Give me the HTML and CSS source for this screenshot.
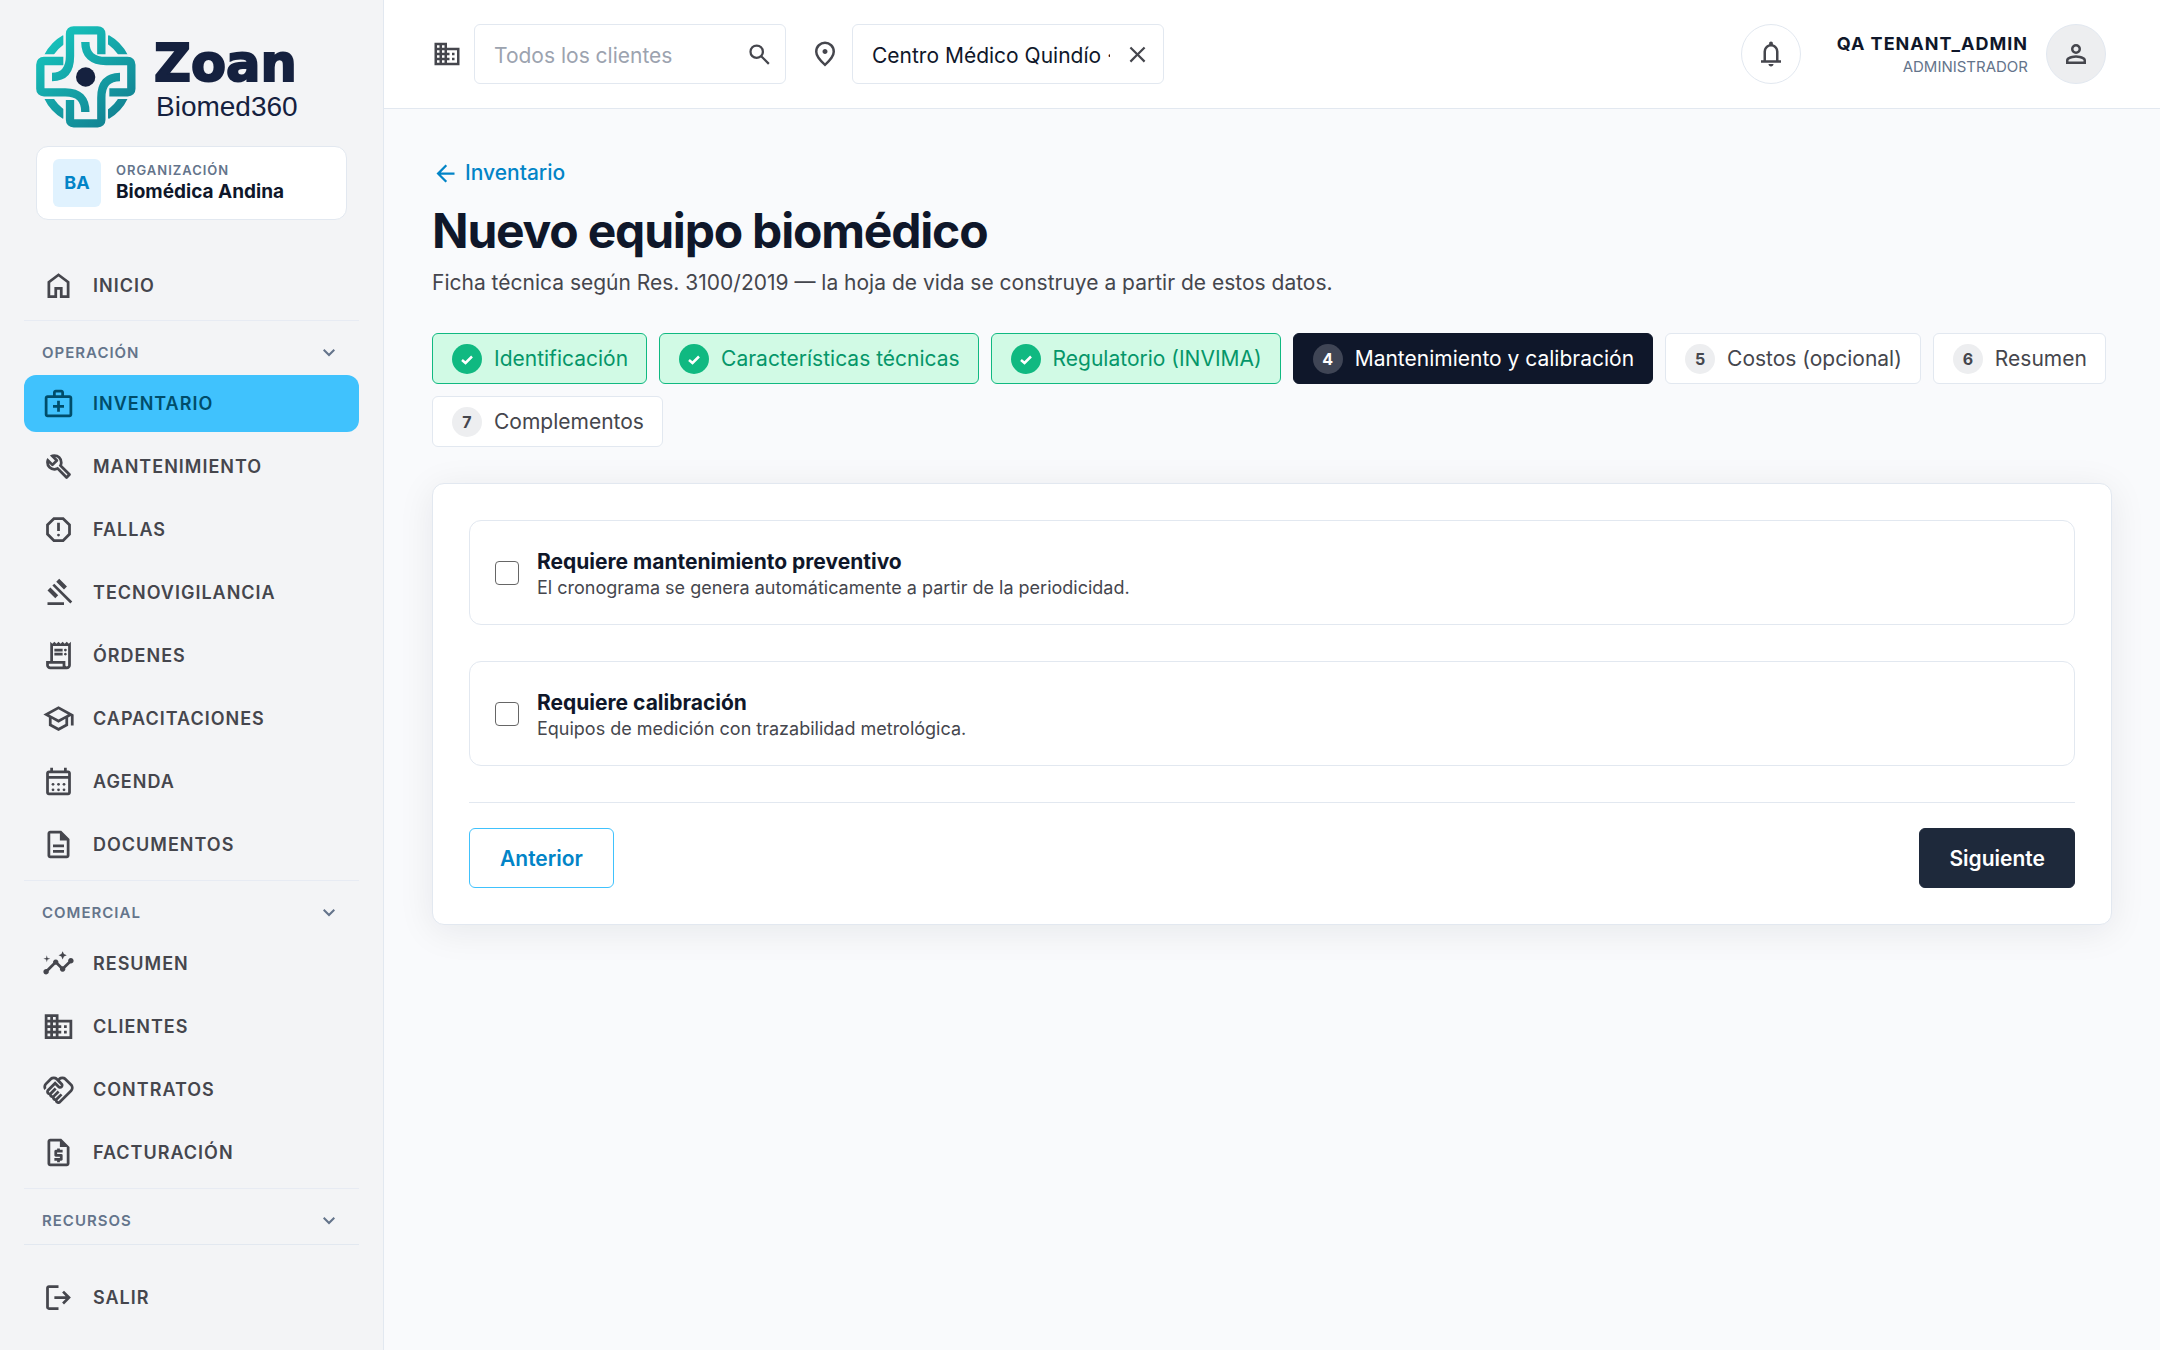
FILE: index.html
```html
<!DOCTYPE html>
<html lang="es">
<head>
<meta charset="utf-8">
<meta name="viewport" content="width=device-width, initial-scale=1">
<title>Nuevo equipo biomédico</title>
<link rel="stylesheet" href="styles.css">
</head>
<body>
<svg class="sprite" aria-hidden="true">
  <symbol id="i-home" viewBox="0 -960 960 960"><path d="M240-200h120v-240h240v240h120v-360L480-740 240-560v360Zm-80 80v-480l320-240 320 240v480H520v-240h-80v240H160Z"/></symbol>
  <symbol id="i-medical" viewBox="0 -960 960 960"><path d="M160-80q-33 0-56.500-23.500T80-160v-480q0-33 23.500-56.500T160-720h160v-80q0-33 23.500-56.500T400-880h160q33 0 56.500 23.500T640-800v80h160q33 0 56.500 23.500T880-640v480q0 33-23.500 56.500T800-80H160Zm0-80h640v-480H160v480Zm240-560h160v-80H400v80Zm40 360v120h80v-120h120v-80H520v-120h-80v120H320v80h120Z"/></symbol>
  <symbol id="i-build" viewBox="0 -960 960 960"><path d="M686-132 444-376q-20 8-40.500 12t-43.500 4q-100 0-170-70t-70-170q0-36 10-68.500t28-61.500l146 146 72-72-146-146q29-18 61.500-28t68.500-10q100 0 170 70t70 170q0 23-4 43.500T584-516l244 242q12 12 12 29t-12 29l-84 84q-12 12-29 12t-29-12Zm29-85 27-27-256-256q18-20 26-46.500t8-53.500q0-60-38.500-104.500T386-758l74 74q12 12 12 28t-12 28L332-500q-12 12-28 12t-28-12l-74-74q9 57 53.500 95.500T360-440q26 0 52-8t47-25l256 256Z"/></symbol>
  <symbol id="i-report" viewBox="0 -960 960 960"><path d="M480-280q17 0 28.500-11.500T520-320q0-17-11.500-28.500T480-360q-17 0-28.500 11.500T440-320q0 17 11.500 28.500T480-280Zm-40-160h80v-240h-80v240ZM330-120 120-330v-300l210-210h300l210 210v300L630-120H330Zm34-80h232l164-164v-232L596-760H364L200-596v232l164 164Z"/></symbol>
  <symbol id="i-gavel" viewBox="0 -960 960 960"><path d="M160-120v-80h480v80H160Zm226-194L160-540l84-86 228 226-86 86Zm254-254L414-796l86-84 226 226-86 86Zm184 408L302-682l56-56 522 522-56 56Z"/></symbol>
  <symbol id="i-receipt" viewBox="0 -960 960 960"><path d="M240-80q-50 0-85-35t-35-85v-120h120v-560l60 60 60-60 60 60 60-60 60 60 60-60 60 60 60-60 60 60 60-60v680q0 50-35 85t-85 35H240Zm480-80q17 0 28.500-11.500T760-200v-560H320v440h360v120q0 17 11.500 28.500T720-160ZM360-600v-80h240v80H360Zm0 120v-80h240v80H360Zm320-120q-17 0-28.500-11.500T640-640q0-17 11.500-28.500T680-680q17 0 28.500 11.500T720-640q0 17-11.500 28.500T680-600Zm0 120q-17 0-28.500-11.500T640-520q0-17 11.500-28.500T680-560q17 0 28.500 11.500T720-520q0 17-11.500 28.500T680-480ZM240-160h360v-80H200v40q0 17 11.500 28.500T240-160Z"/></symbol>
  <symbol id="i-school" viewBox="0 -960 960 960"><path d="M480-120 200-272v-240L40-600l440-240 440 240v320h-80v-276l-80 44v240L480-120Zm0-332 274-148-274-148-274 148 274 148Zm0 241 200-108v-151L480-360 280-470v151l200 108Z"/></symbol>
  <symbol id="i-calendar" viewBox="0 -960 960 960"><path d="M200-80q-33 0-56.500-23.500T120-160v-560q0-33 23.500-56.500T200-800h40v-80h80v80h320v-80h80v80h40q33 0 56.500 23.500T840-720v560q0 33-23.500 56.500T760-80H200Zm0-80h560v-400H200v400Zm0-480h560v-80H200v80Z"/><circle cx="320" cy="-400" r="40"/><circle cx="480" cy="-400" r="40"/><circle cx="640" cy="-400" r="40"/><circle cx="320" cy="-240" r="40"/><circle cx="480" cy="-240" r="40"/><circle cx="640" cy="-240" r="40"/></symbol>
  <symbol id="i-description" viewBox="0 -960 960 960"><path d="M320-240h320v-80H320v80Zm0-160h320v-80H320v80ZM240-80q-33 0-56.500-23.500T160-160v-640q0-33 23.500-56.500T240-880h320l240 240v480q0 33-23.500 56.500T720-80H240Zm280-520v-200H240v640h480v-440H520Z"/></symbol>
  <symbol id="i-insights" viewBox="0 0 24 24"><path d="M21 8c-1.450 0-2.260 1.440-1.930 2.510l-3.550 3.560c-.3-.09-.74-.09-1.040 0l-2.550-2.550C12.270 10.450 11.460 9 10 9c-1.450 0-2.270 1.440-1.930 2.520l-4.560 4.550C2.440 15.740 1 16.550 1 18c0 1.100.9 2 2 2 1.450 0 2.260-1.440 1.930-2.510l4.550-4.560c.3.09.74.09 1.040 0l2.550 2.550C12.730 16.550 13.540 18 15 18c1.450 0 2.270-1.440 1.930-2.520l3.560-3.550C21.560 12.260 23 11.450 23 10c0-1.100-.9-2-2-2zM15 9l.94-2.070L18 6l-2.060-.93L15 3l-.92 2.070L12 6l2.080.93L15 9zM3.500 11L4 9l2-.5L4 8l-.5-2L3 8l-2 .5L3 9l.5 2z"/></symbol>
  <symbol id="i-domain" viewBox="0 -960 960 960"><path d="M80-120v-720h400v160h400v560H80Zm80-80h80v-80h-80v80Zm0-160h80v-80h-80v80Zm0-160h80v-80h-80v80Zm0-160h80v-80h-80v80Zm160 480h80v-80h-80v80Zm0-160h80v-80h-80v80Zm0-160h80v-80h-80v80Zm0-160h80v-80h-80v80Zm160 480h320v-400H480v80h80v80h-80v80h80v80h-80v80Zm160-240v-80h80v80h-80Zm0 160v-80h80v80h-80Z"/></symbol>
  <symbol id="i-handshake" viewBox="0 -960 960 960"><path d="M475-140q4 0 8-2t8-4l328-328q12-12 17.500-27t5.500-30q0-16-5.500-30.500T817-587L647-757q-11-12-25.500-17.500T591-780q-15 0-30 5.500T534-757l-11 11 74 75q15 14 22 32t7 38q0 42-28.500 70.500T527-502q-20 0-38.500-7T456-530l-75-74-175 175q-3 3-4.500 6.500T200-415q0 8 6 14.500t14 6.500q4 0 8-2t6-4l136-136 56 56-135 136q-3 3-4.500 6.500T285-330q0 8 6 14t14 6q4 0 8-2t6-4l136-135 56 56-135 136q-3 2-4.500 6t-1.500 8q0 8 6 14t14 6q4 0 7.500-1.500t6.500-4.500l136-135 56 56-136 136q-3 3-4.500 6.500T454-160q0 8 6.500 14t14.500 6Zm-1 80q-37 0-65.500-24.500T375-146q-34-5-57-28t-28-57q-34-5-56.500-28.500T206-316q-38-5-62-33t-24-66q0-20 7.500-38.500T149-486l232-231 131 131q2 3 6 4.500t8 1.500q9 0 15-5.500t6-14.500q0-4-1.500-8t-4.500-6L398-757q-11-12-25.500-17.500T342-780q-15 0-30 5.500T285-757L144-615q-9 9-15 21t-8 24q-2 12 0 24.500t8 23.500l-58 58q-17-23-25-50.500T40-570q2-28 14-54.500T87-671l141-142q24-23 53.500-35t60.500-12q31 0 60.500 12t52.500 35l11 11 11-11q24-23 53.500-35t60.500-12q31 0 60.500 12t52.500 35l169 169q23 23 35 53t12 61q0 31-12 60.500T873-416L545-89q-14 14-32 21.500T474-60Z"/></symbol>
  <symbol id="i-quote" viewBox="0 -960 960 960"><path d="M440-200h80v-40h40q17 0 28.500-11.500T600-280v-120q0-17-11.500-28.500T560-440H440v-40h160v-80h-80v-40h-80v40h-40q-17 0-28.500 11.500T360-520v120q0 17 11.500 28.500T400-360h120v40H360v80h80v40ZM240-80q-33 0-56.500-23.500T160-160v-640q0-33 23.500-56.500T240-880h320l240 240v480q0 33-23.500 56.500T720-80H240Zm280-560v-160H240v640h480v-480H520Z"/></symbol>
  <symbol id="i-logout" viewBox="0 -960 960 960"><path d="M200-120q-33 0-56.500-23.500T120-200v-560q0-33 23.500-56.500T200-840h280v80H200v560h280v80H200Zm440-160-55-58 102-102H360v-80h327L585-622l55-58 200 200-200 200Z"/></symbol>
  <symbol id="i-search" viewBox="0 -960 960 960"><path d="M784-120 532-372q-30 24-69 38t-83 14q-109 0-184.500-75.500T120-580q0-109 75.500-184.500T380-840q109 0 184.500 75.500T640-580q0 44-14 83t-38 69l252 252-56 56ZM380-400q75 0 127.500-52.500T560-580q0-75-52.500-127.500T380-760q-75 0-127.500 52.500T200-580q0 75 52.500 127.500T380-400Z"/></symbol>
  <symbol id="i-location" viewBox="0 -960 960 960"><path d="M480-480q33 0 56.500-23.500T560-560q0-33-23.500-56.500T480-640q-33 0-56.500 23.500T400-560q0 33 23.500 56.500T480-480Zm0 294q122-112 181-203.500T720-552q0-109-69.500-178.500T480-800q-101 0-170.500 69.500T240-552q0 71 59 162.500T480-186Zm0 106Q319-217 239.500-334.500T160-552q0-150 96.500-239T480-880q127 0 223.500 89T800-552q0 100-79.500 217.500T480-80Z"/></symbol>
  <symbol id="i-close" viewBox="0 -960 960 960"><path d="m256-200-56-56 224-224-224-224 56-56 224 224 224-224 56 56-224 224 224 224-56 56-224-224-224 224Z"/></symbol>
  <symbol id="i-bell" viewBox="0 -960 960 960"><path d="M160-200v-80h80v-280q0-83 50-147.500T420-792v-28q0-25 17.500-42.500T480-880q25 0 42.500 17.500T540-820v28q80 20 130 84.500T720-560v280h80v80H160ZM480-80q-33 0-56.500-23.500T400-160h160q0 33-23.500 56.500T480-80ZM320-280h320v-280q0-66-47-113t-113-47q-66 0-113 47t-47 113v280Z"/></symbol>
  <symbol id="i-person" viewBox="0 -960 960 960"><path d="M480-480q-66 0-113-47t-47-113q0-66 47-113t113-47q66 0 113 47t47 113q0 66-47 113t-113 47ZM160-160v-112q0-34 17.500-62.500T224-378q62-31 126-46.500T480-440q66 0 130 15.500T736-378q29 15 46.500 43.500T800-272v112H160Zm80-80h480v-32q0-11-5.500-20T700-306q-54-27-109-40.500T480-360q-56 0-111 13.500T260-306q-9 5-14.500 14t-5.500 20v32Zm240-320q33 0 56.500-23.500T560-640q0-33-23.500-56.500T480-720q-33 0-56.500 23.500T400-640q0 33 23.500 56.500T480-560Z"/></symbol>
  <symbol id="i-back" viewBox="0 -960 960 960"><path d="m313-440 224 224-57 56-320-320 320-320 57 56-224 224h487v80H313Z"/></symbol>
  <symbol id="i-chevron" viewBox="0 -960 960 960"><path d="M480-344 240-584l56-56 184 184 184-184 56 56-240 240Z"/></symbol>
  <symbol id="i-check" viewBox="0 0 16 16"><path d="M3 9 6.500 12 13 5.500" fill="none" stroke="currentColor" stroke-width="2.500"/></symbol>
</svg>

<div class="app">
  <aside class="sidebar">
    <div class="brand">
      <svg class="brand-mark" viewBox="0 0 300 306" role="img" aria-label="Zoan">
        <defs>
          <linearGradient id="teal" gradientUnits="userSpaceOnUse" x1="40" y1="20" x2="250" y2="290">
            <stop offset="0" stop-color="#17c5bd"/><stop offset="1" stop-color="#128091"/>
          </linearGradient>
        </defs>
        <g fill="none" stroke="url(#teal)" stroke-width="25">
          <path d="M36 92A128 128 0 0 1 88 38M212 38A128 128 0 0 1 264 92M264 212A128 128 0 0 1 212 268M88 268A128 128 0 0 1 36 212"/>
        </g>
        <g fill="none" stroke="#f3f4f6" stroke-width="40" stroke-linejoin="round">
          <path d="M102 85V24Q102 13 113 13H185Q196 13 196 24V85"/>
          <path d="M215 105H275Q286 105 286 116V188Q286 199 275 199H222"/>
          <path d="M196 222V281Q196 292 185 292H113Q102 292 102 281V222"/>
          <path d="M85 199H24Q13 199 13 188V116Q13 105 24 105H82"/>
        </g>
        <g fill="none" stroke="url(#teal)" stroke-width="25">
          <path d="M82 105H24Q13 105 13 116V188Q13 199 24 199H88Q148 199 148 258"/>
          <path d="M48 153Q102 153 102 90V24Q102 13 113 13H185Q196 13 196 24V85"/>
          <path d="M148 48Q148 105 210 105H275Q286 105 286 116V188Q286 199 275 199H220"/>
          <path d="M252 153Q196 153 196 215V281Q196 292 185 292H113Q102 292 102 281V222"/>
        </g>
        <circle cx="149" cy="153" r="29" fill="#15213f"/>
      </svg>
      <div class="brand-text">
        <span class="brand-name">Zoan</span>
        <span class="brand-sub">Biomed360</span>
      </div>
    </div>

    <div class="org">
      <span class="org-badge">BA</span>
      <div class="org-text">
        <span class="org-label">Organización</span>
        <span class="org-name">Biomédica Andina</span>
      </div>
    </div>

    <nav class="nav">
      <a class="nav-item" href="#"><svg class="icon-nav"><use href="#i-home"/></svg>Inicio</a>
      <section class="nav-group">
        <button class="nav-head" type="button">Operación<svg class="icon-sm"><use href="#i-chevron"/></svg></button>
        <a class="nav-item active" href="#" aria-current="page"><svg class="icon-nav"><use href="#i-medical"/></svg>Inventario</a>
        <a class="nav-item" href="#"><svg class="icon-nav"><use href="#i-build"/></svg>Mantenimiento</a>
        <a class="nav-item" href="#"><svg class="icon-nav"><use href="#i-report"/></svg>Fallas</a>
        <a class="nav-item" href="#"><svg class="icon-nav"><use href="#i-gavel"/></svg>Tecnovigilancia</a>
        <a class="nav-item" href="#"><svg class="icon-nav"><use href="#i-receipt"/></svg>Órdenes</a>
        <a class="nav-item" href="#"><svg class="icon-nav"><use href="#i-school"/></svg>Capacitaciones</a>
        <a class="nav-item" href="#"><svg class="icon-nav"><use href="#i-calendar"/></svg>Agenda</a>
        <a class="nav-item" href="#"><svg class="icon-nav"><use href="#i-description"/></svg>Documentos</a>
      </section>
      <section class="nav-group">
        <button class="nav-head" type="button">Comercial<svg class="icon-sm"><use href="#i-chevron"/></svg></button>
        <a class="nav-item" href="#"><svg class="icon-nav"><use href="#i-insights"/></svg>Resumen</a>
        <a class="nav-item" href="#"><svg class="icon-nav"><use href="#i-domain"/></svg>Clientes</a>
        <a class="nav-item" href="#"><svg class="icon-nav"><use href="#i-handshake"/></svg>Contratos</a>
        <a class="nav-item" href="#"><svg class="icon-nav"><use href="#i-quote"/></svg>Facturación</a>
      </section>
      <section class="nav-group">
        <button class="nav-head" type="button">Recursos<svg class="icon-sm"><use href="#i-chevron"/></svg></button>
      </section>
    </nav>

    <div class="sidebar-foot">
      <a class="nav-item" href="#"><svg class="icon-nav"><use href="#i-logout"/></svg>Salir</a>
    </div>
  </aside>

  <div class="page">
    <header class="topbar">
      <div class="filters">
        <div class="filter">
          <svg class="icon-lg"><use href="#i-domain"/></svg>
          <div class="field">
            <input class="field-input" type="text" placeholder="Todos los clientes" aria-label="Cliente">
            <button class="field-btn" type="button" aria-label="Buscar"><svg class="icon-md"><use href="#i-search"/></svg></button>
          </div>
        </div>
        <div class="filter">
          <svg class="icon-lg"><use href="#i-location"/></svg>
          <div class="field">
            <input class="field-input" type="text" value="Centro Médico Quindío ·" aria-label="Sede">
            <button class="field-btn" type="button" aria-label="Limpiar"><svg class="icon-md"><use href="#i-close"/></svg></button>
          </div>
        </div>
      </div>
      <div class="account">
        <button class="round-btn" type="button" aria-label="Notificaciones"><svg class="icon-lg"><use href="#i-bell"/></svg></button>
        <div class="user">
          <div class="user-text">
            <span class="user-name">QA TENANT_ADMIN</span>
            <span class="user-role">Administrador</span>
          </div>
          <button class="round-btn avatar" type="button" aria-label="Cuenta"><svg class="icon-lg"><use href="#i-person"/></svg></button>
        </div>
      </div>
    </header>

    <main class="main">
      <a class="back" href="#"><svg class="icon-md"><use href="#i-back"/></svg>Inventario</a>
      <h1 class="title">Nuevo equipo biomédico</h1>
      <p class="subtitle">Ficha técnica según Res. 3100/2019 — la hoja de vida se construye a partir de estos datos.</p>

      <div class="steps">
        <button class="step done" type="button"><span class="step-dot"><svg class="icon-check"><use href="#i-check"/></svg></span>Identificación</button>
        <button class="step done" type="button"><span class="step-dot"><svg class="icon-check"><use href="#i-check"/></svg></span>Características técnicas</button>
        <button class="step done" type="button"><span class="step-dot"><svg class="icon-check"><use href="#i-check"/></svg></span>Regulatorio (INVIMA)</button>
        <button class="step current" type="button" aria-current="step"><span class="step-dot">4</span>Mantenimiento y calibración</button>
        <button class="step" type="button"><span class="step-dot">5</span>Costos (opcional)</button>
        <button class="step" type="button"><span class="step-dot">6</span>Resumen</button>
        <button class="step" type="button"><span class="step-dot">7</span>Complementos</button>
      </div>

      <form class="card">
        <label class="option">
          <input class="option-check" type="checkbox">
          <span class="option-text">
            <span class="option-title">Requiere mantenimiento preventivo</span>
            <span class="option-desc">El cronograma se genera automáticamente a partir de la periodicidad.</span>
          </span>
        </label>
        <label class="option">
          <input class="option-check" type="checkbox">
          <span class="option-text">
            <span class="option-title">Requiere calibración</span>
            <span class="option-desc">Equipos de medición con trazabilidad metrológica.</span>
          </span>
        </label>
        <div class="actions">
          <button class="btn btn-outline" type="button">Anterior</button>
          <button class="btn btn-dark" type="button">Siguiente</button>
        </div>
      </form>
    </main>
  </div>
</div>
</body>
</html>
```
FILE: styles.css
```css
* { box-sizing: border-box; }

body {
  margin: 0;
  font-family: Inter, "Liberation Sans", sans-serif;
  font-size: 21px;
  line-height: 30px;
  color: #45464d;
  background: #f9fafc;
}

button, input { font: inherit; color: inherit; }
button { cursor: pointer; }
a { text-decoration: none; }
svg { fill: currentColor; flex: none; display: block; }

.sprite { position: absolute; width: 0; height: 0; }
.icon-nav { width: 33px; height: 33px; }
.icon-lg { width: 30px; height: 30px; }
.icon-md { width: 27px; height: 27px; }
.icon-sm { width: 24px; height: 24px; }
.icon-check { width: 16px; height: 16px; }

.app { display: flex; min-height: 100vh; }

/* Sidebar */
.sidebar {
  flex: none;
  width: 384px;
  display: flex;
  flex-direction: column;
  background: #f3f4f6;
  border-right: 1px solid #e2e8f0;
}

.brand { display: flex; gap: 18px; padding: 26px 36px 0; }
.brand-mark { width: 100px; height: 102px; }
.brand-text { display: flex; flex-direction: column; padding-top: 9px; color: #15213f; }
.brand-name {
  font-family: "DejaVu Sans", Verdana, sans-serif;
  font-size: 51px;
  line-height: 58px;
  font-weight: 700;
  -webkit-text-stroke: 2px #15213f;
}
.brand-sub { font-family: "Liberation Sans", Arial, sans-serif; font-size: 28px; line-height: 28px; padding-left: 2px; }

.org {
  display: flex;
  align-items: center;
  gap: 15px;
  margin: 18px 36px 37px;
  padding: 12px 16px;
  background: #fff;
  border: 1px solid #e2e8f0;
  border-radius: 12px;
}
.org-badge {
  width: 48px;
  height: 48px;
  display: grid;
  place-items: center;
  border-radius: 6px;
  background: #e0f2fe;
  color: #0284c7;
  font-size: 18px;
  font-weight: 700;
}
.org-text { display: flex; flex-direction: column; padding-bottom: 3px; }
.org-label { font-size: 13px; line-height: 20px; font-weight: 600; letter-spacing: 1px; text-transform: uppercase; color: #64748b; }
.org-name { font-size: 19px; line-height: 24px; font-weight: 700; color: #0f172a; }

.nav { flex: 1; padding: 0 24px; }
.nav-item {
  display: flex;
  align-items: center;
  gap: 18px;
  height: 57px;
  margin-bottom: 6px;
  padding: 0 18px;
  border-radius: 12px;
  font-size: 18px;
  font-weight: 600;
  letter-spacing: 1px;
  text-transform: uppercase;
  color: #45464d;
}
.nav-item.active { background: #40c2fd; color: #004d6a; }
.nav-group { padding-bottom: 1px; border-top: 1px solid #e7ebf3; }
.nav-head {
  display: flex;
  align-items: center;
  justify-content: space-between;
  width: 100%;
  height: 39px;
  margin: 12px 0 3px;
  padding: 0 18px;
  border: 0;
  background: none;
  font-size: 15px;
  font-weight: 600;
  letter-spacing: 1px;
  text-transform: uppercase;
  color: #64748b;
}
.sidebar-foot { margin: 0 24px; padding: 24px 0 18px; border-top: 1px solid #e2e8f0; }

/* Top bar */
.page { flex: 1; min-width: 0; }
.topbar {
  display: flex;
  align-items: center;
  justify-content: space-between;
  padding: 24px 54px 24px 48px;
  background: #fff;
  border-bottom: 1px solid #e2e8f0;
}
.filters { display: flex; gap: 24px; }
.filter { display: flex; align-items: center; gap: 12px; }
.field {
  display: flex;
  align-items: center;
  width: 312px;
  height: 60px;
  padding: 0 12px 0 19px;
  border: 1px solid #e2e8f0;
  border-radius: 6px;
  background: #fff;
}
.field-input { flex: 1; min-width: 0; padding: 3px 0 0; border: 0; outline: 0; background: none; color: #0f172a; }
.field-input::placeholder { color: #9ca3af; opacity: 1; }
.field-btn { margin-left: 14px; padding: 0; border: 0; background: none; color: #45464d; }

.account { display: flex; align-items: center; gap: 36px; }
.round-btn {
  width: 60px;
  height: 60px;
  display: grid;
  place-items: center;
  padding: 0;
  border: 1px solid #e2e8f0;
  border-radius: 50%;
  background: #fff;
  color: #45464d;
}
.round-btn.avatar { background: #edeef0; }
.user { display: flex; align-items: center; gap: 18px; }
.user-text { display: flex; flex-direction: column; align-items: flex-end; padding-top: 2px; }
.user-name { font-size: 18px; line-height: 24px; font-weight: 700; letter-spacing: 1px; color: #0f172a; }
.user-role { font-size: 15px; line-height: 22px; text-transform: uppercase; color: #64748b; }

/* Content */
.main { padding: 48px; }
.back { display: flex; align-items: center; gap: 6px; width: fit-content; line-height: 32px; font-weight: 500; color: #0284c7; }
.title { margin: 12px 0 7px; font-size: 48px; line-height: 60px; font-weight: 700; letter-spacing: -0.025em; color: #0f172a; }
.subtitle { margin: 0 0 35px; }

.steps { display: flex; flex-wrap: wrap; gap: 12px; }
.step {
  display: flex;
  align-items: center;
  gap: 12px;
  height: 51px;
  padding: 0 18px 0 19px;
  border: 1px solid #e2e8f0;
  border-radius: 6px;
  background: #fff;
}
.step-dot {
  width: 30px;
  height: 30px;
  display: grid;
  place-items: center;
  border-radius: 50%;
  background: #edeef0;
  font-size: 16px;
  font-weight: 700;
}
.step.done { border-color: #10b981; background: #d1fae5; color: #059669; }
.step.done .step-dot { background: #10b981; color: #fff; }
.step.current { border-color: #0f172a; background: #0f172a; color: #fff; }
.step.current .step-dot { background: #3f4555; }

.card {
  display: flex;
  flex-direction: column;
  gap: 36px;
  margin-top: 36px;
  padding: 36px;
  background: #fff;
  border: 1px solid #e2e8f0;
  border-radius: 12px;
  box-shadow: 0 6px 36px rgba(15, 23, 42, 0.08);
}
.option {
  display: flex;
  align-items: center;
  gap: 18px;
  min-height: 105px;
  padding: 24px 25px;
  border: 1px solid #e2e8f0;
  border-radius: 12px;
}
.option-check {
  appearance: none;
  width: 24px;
  height: 24px;
  margin: 0;
  border: 1px solid #666;
  border-radius: 4px;
  background: #fff;
}
.option-check:checked { border-color: #0284c7; background: #0284c7; }
.option-text { display: flex; flex-direction: column; padding-top: 2px; }
.option-title { line-height: 28px; font-weight: 700; color: #0f172a; }
.option-desc { font-size: 18px; line-height: 24px; }

.actions { display: flex; justify-content: space-between; padding-top: 25px; border-top: 1px solid #e2e8f0; }
.btn { height: 60px; padding: 2px 29px 0; border: 1px solid; border-radius: 6px; font-weight: 600; }
.btn-outline { padding: 2px 30px 0; border-color: #40c2fd; background: #fff; color: #0284c7; }
.btn-dark { border-color: #1e293b; background: #1e293b; color: #fff; }
```
